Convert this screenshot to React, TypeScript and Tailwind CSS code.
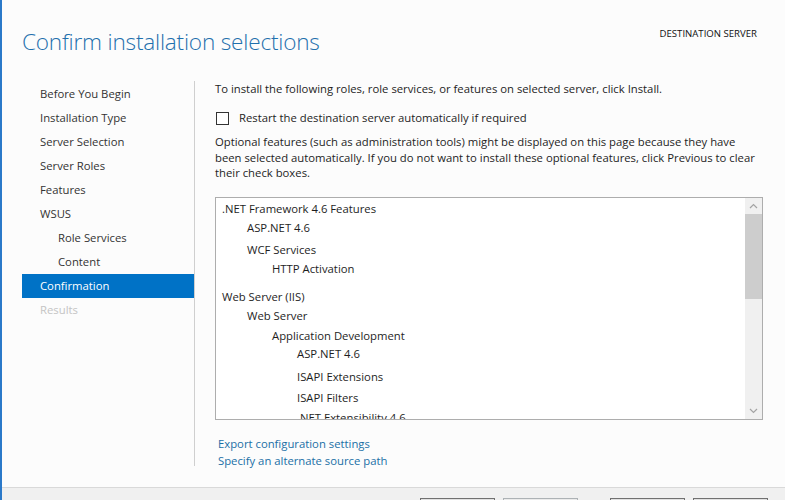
import React from 'react';

const steps = [
  { label: 'Before You Begin', indent: false },
  { label: 'Installation Type', indent: false },
  { label: 'Server Selection', indent: false },
  { label: 'Server Roles', indent: false },
  { label: 'Features', indent: false },
  { label: 'WSUS', indent: false },
  { label: 'Role Services', indent: true },
  { label: 'Content', indent: true },
  { label: 'Confirmation', indent: false, active: true },
  { label: 'Results', indent: false, disabled: true },
];

// level = indent depth, gap = margin above (px)
const items = [
  { text: '.NET Framework 4.6 Features', level: 0, gap: 'mt-[3px]' },
  { text: 'ASP.NET 4.6', level: 1, gap: 'mt-[3px]' },
  { text: 'WCF Services', level: 1, gap: 'mt-[6px]' },
  { text: 'HTTP Activation', level: 2, gap: 'mt-[3px]' },
  { text: 'Web Server (IIS)', level: 0, gap: 'mt-[12px]' },
  { text: 'Web Server', level: 1, gap: 'mt-[3px]' },
  { text: 'Application Development', level: 2, gap: 'mt-[4px]' },
  { text: 'ASP.NET 4.6', level: 3, gap: 'mt-[2px]' },
  { text: 'ISAPI Extensions', level: 3, gap: 'mt-[7px]' },
  { text: 'ISAPI Filters', level: 3, gap: 'mt-[5px]' },
  { text: '.NET Extensibility 4.6', level: 3, gap: 'mt-[4px]' },
];

const indents = ['pl-0', 'pl-[25px]', 'pl-[50px]', 'pl-[75px]'];

export default function App() {
  return (
    <div className="w-[785px] h-[500px] overflow-hidden flex flex-col bg-[#fcfcfc] border-l-2 border-[#2b79c9] text-[11.3px] text-[#1e1e1e] font-['Open_Sans',sans-serif]">
      {/* Header */}
      <div className="h-[81px] shrink-0 flex justify-between pl-[20px] pr-[28px]">
        <h1 className="mt-[26px] text-[22.6px] leading-[32px] font-light text-[#1f70ad] tracking-[-0.2px]">
          Confirm installation selections
        </h1>
        <div className="mt-[27px] text-[9.6px] leading-[14px] text-[#111]">DESTINATION SERVER</div>
      </div>

      {/* Body */}
      <div className="flex flex-1 min-h-0">
        <div className="w-[193px] shrink-0 h-[385px] pl-[20px] border-r border-[#cfcfcf] flex flex-col pt-[1px]">
          {steps.map((s) => (
            <div
              key={s.label}
              className={
                'h-[24px] flex items-center ' +
                (s.indent ? 'pl-[36px] ' : 'pl-[18px] ') +
                (s.active ? 'bg-[#0072c6] text-white' : s.disabled ? 'text-[#c4c4c4]' : 'text-[#333]')
              }
            >
              {s.label}
            </div>
          ))}
        </div>

        <div className="flex-1 min-w-0 pl-[20px] flex flex-col">
          <div className="leading-[16px]">
            To install the following roles, role services, or features on selected server, click Install.
          </div>
          <label className="mt-[13px] h-[16px] flex items-center gap-[10px]">
            <span className="ml-[1px] w-[13px] h-[13px] border border-[#333] bg-white" />
            <span>Restart the destination server automatically if required</span>
          </label>
          <p className="mt-[8px] leading-[15.5px] whitespace-nowrap">
            Optional features (such as administration tools) might be displayed on this page because they have
            <br />
            been selected automatically. If you do not want to install these optional features, click Previous to clear
            <br />
            their check boxes.
          </p>

          {/* List box */}
          <div className="mt-[16px] w-[548px] h-[223px] border border-[#adadad] bg-white flex overflow-hidden">
            <div className="flex-1 pl-[6px] flex flex-col">
              {items.map((it, i) => (
                <div key={i} className={'h-[16px] leading-[16px] shrink-0 whitespace-nowrap ' + it.gap + ' ' + indents[it.level]}>
                  {it.text}
                </div>
              ))}
            </div>
            <div className="w-[17px] shrink-0 bg-[#f0f0f0] flex flex-col">
              <div className="h-[16px] flex items-center justify-center">
                <svg width="9" height="6" viewBox="0 0 9 6" fill="none" stroke="#a3a3a3" strokeWidth="1.2">
                  <path d="M1 5 L4.5 1.5 L8 5" />
                </svg>
              </div>
              <div className="h-[85px] bg-[#cdcdcd]" />
              <div className="flex-1" />
              <div className="h-[16px] flex items-center justify-center">
                <svg width="9" height="6" viewBox="0 0 9 6" fill="none" stroke="#a3a3a3" strokeWidth="1.2">
                  <path d="M1 1 L4.5 4.5 L8 1" />
                </svg>
              </div>
            </div>
          </div>

          <div className="mt-[15px] pl-[3px] flex flex-col leading-[17px] text-[#1a6fa6]">
            <a href="#">Export configuration settings</a>
            <a href="#">Specify an alternate source path</a>
          </div>
        </div>
      </div>

      {/* Footer */}
      <div className="h-[13px] shrink-0 border-t border-[#d9d9d9] bg-[#f0f0f0] flex justify-end pr-[17px] pt-[10px]">
        <div className="w-[75px] h-[23px] border border-[#707070] bg-[#e1e1e1]" />
        <div className="ml-[8px] w-[75px] h-[23px] border border-[#adb2b5] bg-[#ebebeb]" />
        <div className="ml-[32px] w-[75px] h-[23px] border border-[#707070] bg-[#e1e1e1]" />
        <div className="ml-[8px] w-[75px] h-[23px] border border-[#707070] bg-[#e1e1e1]" />
      </div>
    </div>
  );
}
